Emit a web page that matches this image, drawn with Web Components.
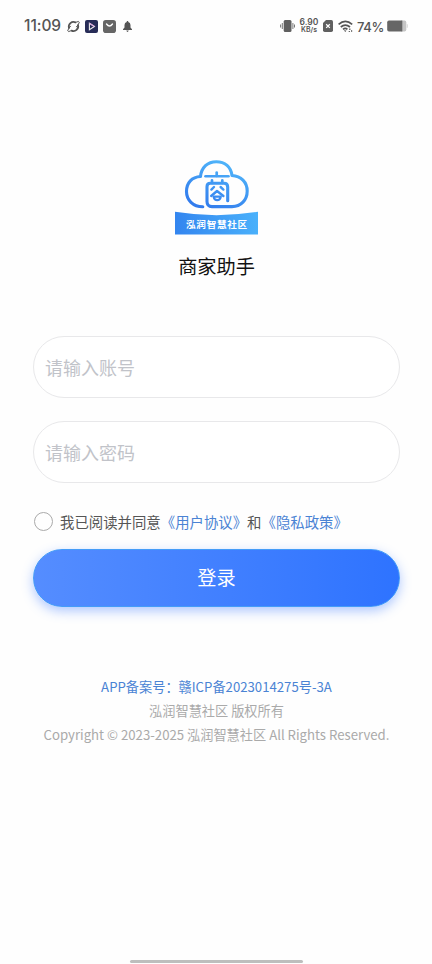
<!DOCTYPE html>
<html lang="zh-CN">
<head>
<meta charset="utf-8">
<title>商家助手</title>
<style>
html,body{margin:0;height:100%;background:#fefefe}
body{font-family:"Noto Sans CJK SC",sans-serif;overflow:hidden}
</style>
</head>
<body>
<login-page></login-page>
<script>
const define=(name,html)=>{
  const t=document.createElement('template');
  t.innerHTML=html;
  customElements.define(name,class extends HTMLElement{
    constructor(){super();this.attachShadow({mode:'open'}).append(t.content.cloneNode(true));}
  });
};

define('status-bar',`
<style>
:host{display:flex;justify-content:space-between;align-items:center;box-sizing:border-box;width:100%;height:52px;padding:0 24px;color:#555;font-family:Roboto,sans-serif}
.g{display:flex;align-items:center}
svg{display:block;flex:none}
.time{font:500 15.5px/20px Inter,sans-serif;width:38px;margin-right:5px;white-space:nowrap;letter-spacing:-.05px}
.speed{display:flex;flex-direction:column;align-items:center;width:20px;margin:0 4px;font:600 8.5px/8px Inter,sans-serif;white-space:nowrap}
.speed span+span{font-size:7px}
.pct{font:500 13px/18px Inter,sans-serif;width:27px;margin:1px 3px 0 4px;white-space:nowrap;letter-spacing:-.4px}
</style>
<div class="g">
 <span class="time">11:09</span>
 <svg width="13" height="13" viewBox="0 0 13 13" fill="none" stroke="#555" stroke-width="1.5" stroke-linecap="round"><path d="M2 8A4.700 4.700 0 0 1 8.500 2.400M11 5A4.700 4.700 0 0 1 4.500 10.600" stroke-width="1.800"/><path d="M9.500 2Q12.300.7 12.300 2.200 11.800 4.500 9.500 6.800M3.500 11Q.7 12.300.7 10.800 1.200 8.500 3.500 6.200" stroke-width="1"/></svg>
 <svg style="margin-left:5px" width="13" height="13" viewBox="0 0 13 13"><rect width="13" height="13" rx="2" fill="#272c57"/><path d="M4.4 3.2 9.4 6.5 4.4 9.7Z" fill="none" stroke="#eee" stroke-width="1.1"/><path d="M4.4 3.2 9.4 6.5" stroke="#d8a4da" stroke-width="1.1"/></svg>
 <svg style="margin-left:5px" width="13" height="13" viewBox="0 0 13 13"><rect width="13" height="13" rx="2.8" fill="#666"/><path d="M3.5 4Q6.5 8 9.5 4" fill="none" stroke="#fff" stroke-width="1.3" stroke-linecap="round"/></svg>
 <svg style="margin-left:7px" width="9" height="11" viewBox="0 0 9 11" fill="#555"><path d="M3.8 0h1.4v1Q7.5 1.5 7.5 4v2.5L9 8.3V9H0v-.7l1.5-1.8V4Q1.5 1.5 3.8 1ZM3.3 9.6h2.4Q5.3 11 4.5 11T3.3 9.6"/></svg>
</div>
<div class="g">
 <svg width="15" height="14" viewBox="0 0 15 14"><rect x="3.700" y="1" width="7.8" height="12" rx="1.5" fill="#606060"/><path d="M2.3 4v6M.6 5.5v3M12.900 4v6M14.5 5.5v3" stroke="#777" stroke-width="1"/></svg>
 <div class="speed"><span>6.90</span><span>KB/s</span></div>
 <svg width="10" height="12" viewBox="0 0 10 12"><path d="M3 0h5.3Q10 0 10 1.7v8.6Q10 12 8.3 12H1.7Q0 12 0 10.3V3Z" fill="#606060"/><path d="M3.2 4.3 6.8 7.9M6.8 4.3 3.2 7.9" stroke="#fff" stroke-width="1.3"/></svg>
 <svg style="margin-left:5px" width="15" height="13" viewBox="0 0 15 13" fill="none" stroke="#555" stroke-width="1.700"><path d="M.6 4.4Q7.3-1.5 14.2 4.4M2.8 7Q7.3 3.1 12 7M5 9.4Q7.3 7.4 9.4 9.4"/><path d="m5.8 10.3 1.5 1.7 1.2-1.5Z" fill="#555" stroke="none"/><path d="M11.8 8.5v1.4M13.6 10.2v1.5M11.3 11v1" stroke-width="1.2"/></svg>
 <span class="pct">74%</span>
 <svg width="21" height="12" viewBox="0 0 21 12"><path d="M14 .5h3.5Q19.3.5 19.3 2.3v7.4q0 1.8-1.8 1.8H14ZM19.9 4h.4q.7 2 0 4h-.4Z" fill="#c5c5c5"/><path d="M2 .5h13.3v11H2Q.2 11.5.2 9.700V2.300Q.2.5 2 .5Z" fill="#666"/></svg>
</div>`);

define('brand-logo',`
<style>
:host{display:grid;width:83px;height:78px}
svg{grid-area:1/1;display:block}
span{grid-area:1/1;align-self:end;text-align:center;font-size:9.6px;line-height:14px;font-weight:700;letter-spacing:.72px;color:#fff;padding:0 0 5px 2px;white-space:nowrap;z-index:1}
</style>
<svg width="83" height="78" viewBox="0 0 83 78" fill="none">
 <defs>
 <linearGradient id="c" gradientUnits="userSpaceOnUse" x1="50" y1="2" x2="32" y2="50"><stop stop-color="#50b6fa"/><stop offset="1" stop-color="#327ced"/></linearGradient>
 <linearGradient id="b" gradientUnits="userSpaceOnUse" x1="0" y1="70" x2="83" y2="62"><stop stop-color="#3385ef"/><stop offset="1" stop-color="#4ab1fb"/></linearGradient>
 </defs>
 <g stroke="url(#c)" stroke-linecap="round" stroke-linejoin="round">
 <path d="M27.800 48.700C18 48.700 11.500 42 11.500 33.500 11.500 24.500 17 19 25.500 18.500 26.500 9.500 32.500 3.700 41.300 3.700 50 3.700 56 9 57 17.500 66 18 72.200 24 72.200 33 72.200 42 66 48.600 57 48.600H37Q32 48.600 32 43.500V28.800Q32 25.300 35.200 25.300H49Q52.700 25.300 52.700 29V42.800" stroke-width="3.100"/>
 <path d="M41.700 14.500V18" stroke-width="2.700"/>
 <path d="M30.500 18.300H53.500" stroke-width="2.600"/>
 <path d="M37 22.300V25M47.300 22.300V25" stroke-width="2.700"/>
 <path d="M39 29 36.400 31.600M45.600 29 48.400 31.600M36.200 38 42 33 48.400 38" stroke-width="2.400"/>
 <path d="M38.600 38.700H45.800Q45 42.200 42.200 42.200T38.600 38.700Z" stroke-width="2.200"/>
 </g>
 <path d="M0 53.800Q41.500 60.500 83 53.800V76.500H0Z" fill="url(#b)"/>
</svg>
<span>泓润智慧社区</span>`);

define('text-field',`
<style>
:host{display:flex;align-items:center;box-sizing:border-box;width:367px;height:62px;border:1px solid #e8e8ea;border-radius:31px;padding:0 11px 1px;font-size:18px;line-height:26px;color:#c1c3c9;background:#fff}
</style><slot></slot>`);

define('agree-row',`
<style>
:host{display:flex;align-items:center;height:22px;font-size:14.4px;line-height:22px;color:#555;white-space:nowrap}
i{box-sizing:border-box;width:19px;height:19px;border:1px solid #aaa;border-radius:50%;margin:0 7px 1px 1px;flex:none}
::slotted(a){color:#4a83d4}
</style><i></i><span><slot></slot></span>`);

define('primary-button',`
<style>
:host{display:flex;align-items:center;justify-content:center;box-sizing:border-box;width:367px;height:58px;padding-bottom:2px;border:1px solid #449cf8;border-radius:29px;background:linear-gradient(90deg,#558dff,#2e73ff) border-box;box-shadow:0 4px 12px rgba(64,124,255,.42);color:#fff;font-size:19.200px;line-height:28px}
</style><slot></slot>`);

define('page-footer',`
<style>
:host{display:flex;flex-direction:column;align-items:center;font-size:13.200px;line-height:24px;color:#aaa;white-space:nowrap}
::slotted(a){color:#4a83d4}
</style><slot></slot>`);

define('login-page',`
<style>
:host{display:flex;flex-direction:column;align-items:center;box-sizing:border-box;width:432px;height:964px;padding-bottom:1px}
brand-logo{margin-top:106px}
h1{margin:16px 0 0 1px;font-size:19.200px;line-height:28px;font-weight:400;color:#111}
form{display:flex;flex-direction:column;width:367px;margin:56px 0 0 1px}
text-field+text-field{margin-top:23px}
agree-row{margin-top:28px}
primary-button{margin-top:16px}
page-footer{margin:68px 0 0 1px}
.home{margin-top:auto;width:173px;height:3px;border-radius:2px;background:#bdbebd}
</style>
<status-bar></status-bar>
<brand-logo></brand-logo>
<h1>商家助手</h1>
<form>
 <text-field>请输入账号</text-field>
 <text-field>请输入密码</text-field>
 <agree-row>我已阅读并同意<a>《用户协议》</a>和<a>《隐私政策》</a></agree-row>
 <primary-button>登录</primary-button>
</form>
<page-footer><a>APP备案号：赣ICP备2023014275号-3A</a><span>泓润智慧社区 版权所有</span><span>Copyright © 2023-2025 泓润智慧社区 All Rights Reserved.</span></page-footer>
<div class="home"></div>`);
</script>
</body>
</html>
